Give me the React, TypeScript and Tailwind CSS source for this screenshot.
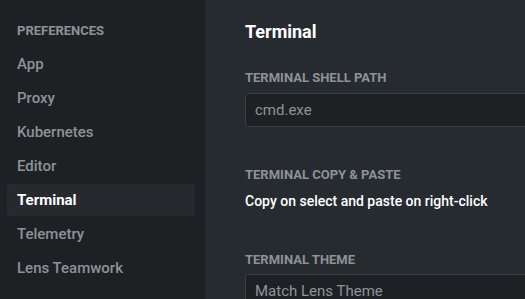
import React from "react";

const items = ["App", "Proxy", "Kubernetes", "Editor", "Terminal", "Telemetry", "Lens Teamwork"];

export default function App() {
  return (
    <div
      className="flex w-[525px] h-[299px] overflow-hidden bg-[#262b2f]"
      style={{ fontFamily: "Roboto, 'Noto Sans', sans-serif" }}
    >
      <aside className="w-[205px] shrink-0 bg-[#1e2124] pt-[23px] pl-[7px] pr-[10px]">
        <div className="pl-[10px] text-[13px] leading-[16px] font-bold text-[#8e9297]">
          PREFERENCES
        </div>
        <nav className="mt-[9px] flex flex-col gap-[2px]">
          {items.map((it) => (
            <div
              key={it}
              className={
                it === "Terminal"
                  ? "h-[32px] flex items-center pl-[10px] rounded-[4px] bg-[#262a2e] text-white font-bold text-[15px]"
                  : "h-[32px] flex items-center pl-[10px] rounded-[4px] text-[#8e9297] font-medium text-[15px]"
              }
            >
              {it}
            </div>
          ))}
        </nav>
      </aside>
      <main className="flex-1 pl-[40px] pt-[20px]">
        <div className="w-[600px]">
          <h1 className="text-[18px] leading-[24px] font-bold text-white">Terminal</h1>
          <div className="mt-[26px] text-[13px] leading-[16px] font-bold text-[#8e9297]">
            TERMINAL SHELL PATH
          </div>
          <div className="mt-[7px] h-[34px] rounded-[3px] border border-[#3a3f44] bg-[#1e2124] flex items-center pl-[9px] text-[15px] text-[#8e9297]">
            cmd.exe
          </div>
          <div className="mt-[40px] text-[13px] leading-[16px] font-bold text-[#8e9297]">
            TERMINAL COPY &amp; PASTE
          </div>
          <div className="mt-[8px] text-[14px] leading-[20px] font-medium text-white">
            Copy on select and paste on right-click
          </div>
          <div className="mt-[41px] text-[13px] leading-[16px] font-bold text-[#8e9297]">
            TERMINAL THEME
          </div>
          <div className="mt-[6px] h-[34px] rounded-[3px] border border-[#3a3f44] bg-[#1e2124] flex items-center pl-[9px] text-[15px] text-[#8e9297]">
            Match Lens Theme
          </div>
        </div>
      </main>
    </div>
  );
}
